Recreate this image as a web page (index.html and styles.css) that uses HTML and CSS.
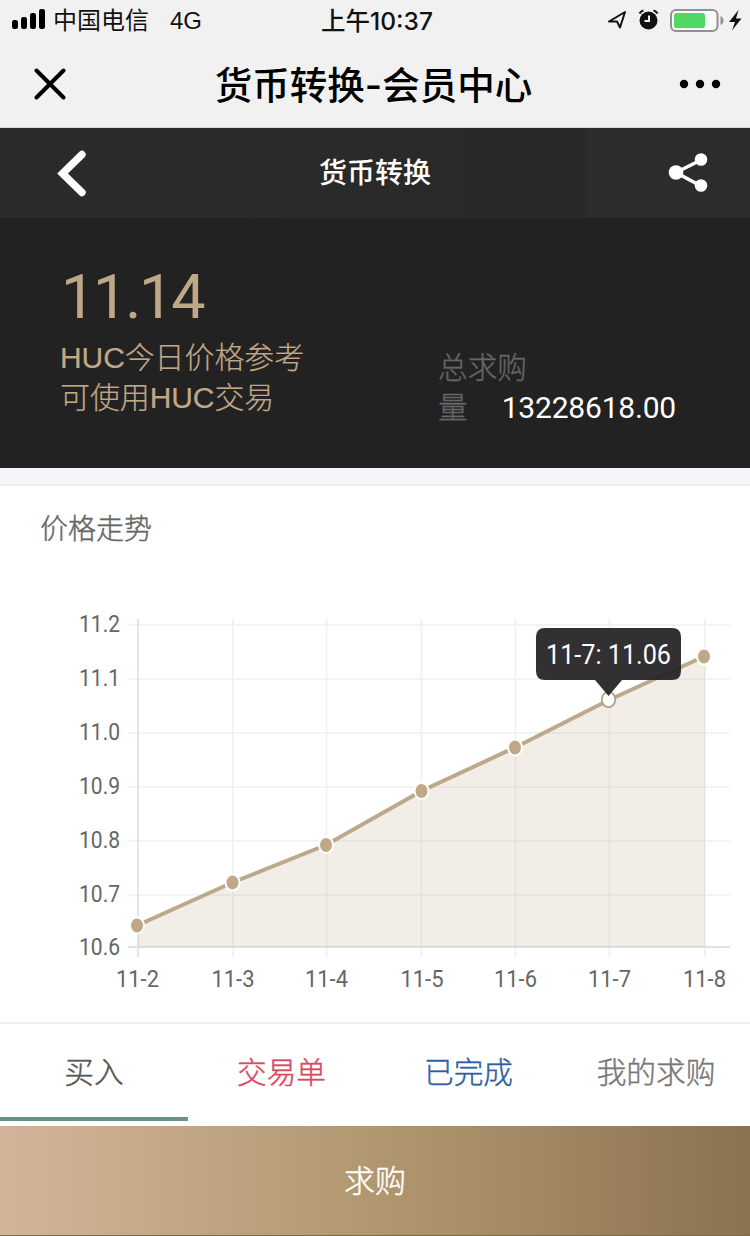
FILE: index.html
```html
<!DOCTYPE html>
<html lang="zh-CN">
<head>
<meta charset="utf-8">
<title>货币转换-会员中心</title>
<link rel="stylesheet" href="styles.css">
</head>
<body>
<div class="status-bar">
  <div class="carrier">
    <svg class="signal" width="34" height="22" viewBox="0 0 34 22"><rect x="0" y="11" width="6" height="9" rx="2.2"/><rect x="9" y="8" width="6" height="12" rx="2.2"/><rect x="18" y="4" width="6" height="16" rx="2.2"/><rect x="27" y="0" width="6" height="20" rx="2.2"/></svg>
    <span class="carrier-name">中国电信</span>
    <span class="network">4G</span>
  </div>
  <div class="clock">上午10:37</div>
  <svg class="indicators" width="142" height="30" viewBox="0 0 142 30">
    <path d="M1 14.500 17 5 12 20.500 9 14.500Z" fill="none" stroke="#111" stroke-width="2" stroke-linejoin="round"/>
    <circle cx="40.500" cy="13.500" r="9" fill="#111"/>
    <path d="M31.500 6.500q1.500-2.500 4-3M45.500 3.500q2.500.500 4 3" fill="none" stroke="#111" stroke-width="2.200"/>
    <path d="M41 8.500v5.500h-4.500" fill="none" stroke="#f1f1f1" stroke-width="2"/>
    <rect x="63" y="3" width="46.500" height="21" rx="5" fill="#fafafa" stroke="#929292" stroke-width="2"/>
    <rect x="66" y="6" width="31" height="15" rx="2.500" fill="#4fd964"/>
    <path d="M112.500 9v9q3-1.500 3-4.500t-3-4.500z" fill="#929292"/>
    <path d="M130.500 3 121 15h6l-3 8.500 9.500-12h-5.500z" fill="#111"/>
  </svg>
</div>
<div class="browser-bar">
  <svg class="close" width="32" height="32" viewBox="0 0 32 32"><path d="m2.500 2.500 27 27m0-27-27 27" fill="none" stroke="#000" stroke-width="4" stroke-linecap="round"/></svg>
  <h1 class="page-title">货币转换-会员中心</h1>
  <svg class="more" width="42" height="10" viewBox="0 0 42 10"><circle cx="5" cy="5" r="4.200"/><circle cx="21" cy="5" r="4.200"/><circle cx="37" cy="5" r="4.200"/></svg>
</div>
<header class="app-header">
  <svg class="back" width="30" height="48" viewBox="0 0 30 48"><path d="M25 5.500 5.500 24.500 25 43.500" fill="none" stroke="#fff" stroke-width="7.400" stroke-linecap="round"/></svg>
  <h2 class="app-title">货币转换</h2>
  <svg class="share" width="40" height="40" viewBox="0 0 40 40"><path d="M33 7 8 19.500l25 13.500" fill="none" stroke="#fff" stroke-width="3.600"/><g fill="#fff"><circle cx="33" cy="6.500" r="6.300"/><circle cx="8" cy="19.500" r="7.300"/><circle cx="33" cy="32.500" r="6.300"/></g></svg>
</header>
<section class="summary">
  <div class="price">
    <div class="price-value">11.14</div>
    <p class="price-note">HUC今日价格参考<br>可使用HUC交易</p>
  </div>
  <div class="demand">
    <div class="demand-label">总求购</div>
    <div class="demand-row"><span class="demand-label">量</span><span class="demand-value">13228618.00</span></div>
  </div>
</section>
<section class="trend">
  <h3 class="trend-title">价格走势</h3>
  <svg class="chart" width="750" height="420" viewBox="0 600 750 420">
    <g class="grid">
      <path d="M128 625h602M128 679h602M128 733h602M128 787h602M128 841h602M128 895h602"/>
      <path d="M233 619v338M326.500 619v338M421.500 619v338M515.500 619v338M609.500 619v338M705 619v338"/>
    </g>
    <path class="axis" d="M128 947h602M138 619v338"/>
    <path class="area" d="M138 925.500 233 882.500 326 845 421.500 791 515 747.500 609 700 705 656.500V947H138Z"/>
    <path class="line" d="M137 925.500 232.500 882.500 326 845 421.500 791 515 747.500 609 700 704 656.500"/>
    <g class="points">
      <ellipse cx="137" cy="925.500" rx="7" ry="8"/><ellipse cx="232.500" cy="882.500" rx="7" ry="8"/><ellipse cx="326" cy="845" rx="7" ry="8"/><ellipse cx="421.500" cy="791" rx="7" ry="8"/><ellipse cx="515" cy="747.500" rx="7" ry="8"/><ellipse cx="704" cy="656.500" rx="7" ry="8"/>
    </g>
    <ellipse class="point-active" cx="608.500" cy="699.500" rx="6.800" ry="7.700"/>
    <path class="tooltip" d="M545 628h127q9 0 9 9v34q0 9-9 9h-50l-13.500 16-13.500-16h-50q-9 0-9-9v-34q0-9 9-9z"/>
    <text class="tooltip-text" x="546" y="664" textLength="125" lengthAdjust="spacingAndGlyphs">11-7: 11.06</text>
    <g class="labels">
      <text x="79" y="632" textLength="41" lengthAdjust="spacingAndGlyphs">11.2</text>
      <text x="79" y="686" textLength="41" lengthAdjust="spacingAndGlyphs">11.1</text>
      <text x="79" y="740" textLength="41" lengthAdjust="spacingAndGlyphs">11.0</text>
      <text x="79" y="794" textLength="41" lengthAdjust="spacingAndGlyphs">10.9</text>
      <text x="79" y="848" textLength="41" lengthAdjust="spacingAndGlyphs">10.8</text>
      <text x="79" y="902" textLength="41" lengthAdjust="spacingAndGlyphs">10.7</text>
      <text x="79" y="955" textLength="41" lengthAdjust="spacingAndGlyphs">10.6</text>
      <text x="116" y="987" textLength="43" lengthAdjust="spacingAndGlyphs">11-2</text>
      <text x="211.500" y="987" textLength="43" lengthAdjust="spacingAndGlyphs">11-3</text>
      <text x="305" y="987" textLength="43" lengthAdjust="spacingAndGlyphs">11-4</text>
      <text x="400.500" y="987" textLength="43" lengthAdjust="spacingAndGlyphs">11-5</text>
      <text x="494" y="987" textLength="43" lengthAdjust="spacingAndGlyphs">11-6</text>
      <text x="588" y="987" textLength="43" lengthAdjust="spacingAndGlyphs">11-7</text>
      <text x="683" y="987" textLength="43" lengthAdjust="spacingAndGlyphs">11-8</text>
    </g>
  </svg>
</section>
<nav class="tabs">
  <a class="tab tab-active">买入</a>
  <a class="tab tab-orders">交易单</a>
  <a class="tab tab-done">已完成</a>
  <a class="tab tab-mine">我的求购</a>
</nav>
<button class="submit">求购</button>
</body>
</html>
```
FILE: styles.css
```css
* { box-sizing: border-box; margin: 0; padding: 0; }
body {
  width: 750px;
  height: 1236px;
  overflow: hidden;
  display: flex;
  flex-direction: column;
  background: #fff;
  font-family: "Liberation Sans", "Noto Sans CJK SC", sans-serif;
  font-kerning: none;
}
svg { display: block; flex: none; }
.status-bar {
  height: 40px;
  flex: none;
  display: grid;
  grid-template-columns: 304px 146px 1fr;
  align-items: center;
  background: #f1f1f1;
  color: #111;
  font: 24px/38px Inter, "Noto Sans CJK SC", sans-serif;
}
.carrier { display: flex; align-items: center; padding-left: 12px; white-space: nowrap; }
.carrier-name { margin-left: 7px; padding-top: 2px; }
.network { margin-left: 21px; padding-top: 2px; font-family: "Liberation Sans", sans-serif; }
.clock { padding-top: 1px; text-align: center; font-weight: 500; font-size: 24.5px; white-space: nowrap; }
.indicators { margin: 4px 0 0 158px; }
.browser-bar {
  height: 88px;
  flex: none;
  display: grid;
  grid-template-columns: 100px 1fr 100px;
  align-items: center;
  background: #f1f1f1;
  border-bottom: 1px solid #ddd;
}
.close { margin-left: 34px; }
.page-title {
  padding: 4px 3px 0 0;
  color: #000;
  text-align: center;
  font: 500 37.5px/84px Inter, "Noto Sans CJK SC", sans-serif;
}
.more { margin-left: 29px; }
.app-header {
  height: 90px;
  flex: none;
  display: grid;
  grid-template-columns: 100px 1fr 100px;
  align-items: center;
  background: linear-gradient(90deg, #2b2b2b 0, #292929 585px, #2c2b2d 586px);
}
.back { margin-left: 57px; }
.app-title {
  padding-bottom: 4px;
  color: #fff;
  text-align: center;
  font: 500 28px/84px "Noto Sans CJK SC", sans-serif;
}
.share { margin-left: 18px; }
.summary {
  height: 250px;
  flex: none;
  display: flex;
  padding-left: 60px;
  background: #232223;
}
.price { width: 378px; padding-top: 45px; color: #c0a886; }
.price-value { font-family: Roboto, sans-serif; font-size: 61px; line-height: 68px; letter-spacing: -2.2px; padding-left: 1px; }
.price-note {
  padding-top: 7px;
  font-size: 30px;
  line-height: 40px;
  font-weight: 300;
  letter-spacing: -.1px;
  -webkit-text-stroke: .2px currentColor;
}
.demand { padding-top: 130px; line-height: 40px; font-size: 29.7px; }
.demand-row { display: flex; gap: 34px; }
.demand-label { color: #666; font-weight: 300; -webkit-text-stroke: .3px currentColor; }
.demand-value { color: #fff; font-family: Roboto, sans-serif; font-size: 30px; letter-spacing: -.2px; }
.trend { flex: none; height: 554px; border-top: 16px solid #f7f5f9; }
.trend-title {
  height: 116px;
  padding: 22px 0 0 40px;
  border-top: 2px solid #efedf1;
  color: #666;
  font-size: 28px;
  line-height: 44px;
  font-weight: 300;
  -webkit-text-stroke: .4px currentColor;
}
.chart { font-family: Roboto, sans-serif; }
.grid path { fill: none; stroke: #f0eef2; stroke-width: 1.6; }
.axis { fill: none; stroke: #e2e0e5; stroke-width: 1.8; }
.area { fill: #c0a886; fill-opacity: .2; }
.line { fill: none; stroke: #bba98b; stroke-width: 4; }
.points { fill: #c0a886; stroke: #fff; stroke-width: 2; }
.point-active { fill: #fff; stroke: #b5a083; stroke-width: 1.8; }
.tooltip { fill: #252326; fill-opacity: .94; }
.tooltip-text { fill: #fff; font-size: 27.5px; }
.labels { fill: #666; font-size: 24px; }
.tabs {
  height: 104px;
  flex: none;
  display: grid;
  grid-template-columns: 188px 187px 187px 188px;
  border-top: 2px solid #f1eff1;
  background: #fff;
}
.tab {
  height: 97px;
  padding-top: 27px;
  text-align: center;
  font-size: 29.7px;
  line-height: 44px;
  font-weight: 300;
  -webkit-text-stroke: .4px currentColor;
}
.tab-active { color: #555; border-bottom: 4px solid #67947b; }
.tab-orders { color: #d94864; }
.tab-done { color: #2e5fa3; }
.tab-mine { color: #777; }
.submit {
  flex: 1;
  padding-bottom: 4px;
  border: 0;
  border-bottom: 1px solid #80694a;
  background: linear-gradient(90deg, #d2b598, #b0976f 50%, #8c7350);
  color: #fff;
  font: 300 31px/44px "Noto Sans CJK SC", sans-serif;
  -webkit-text-stroke: .4px currentColor;
}
```
